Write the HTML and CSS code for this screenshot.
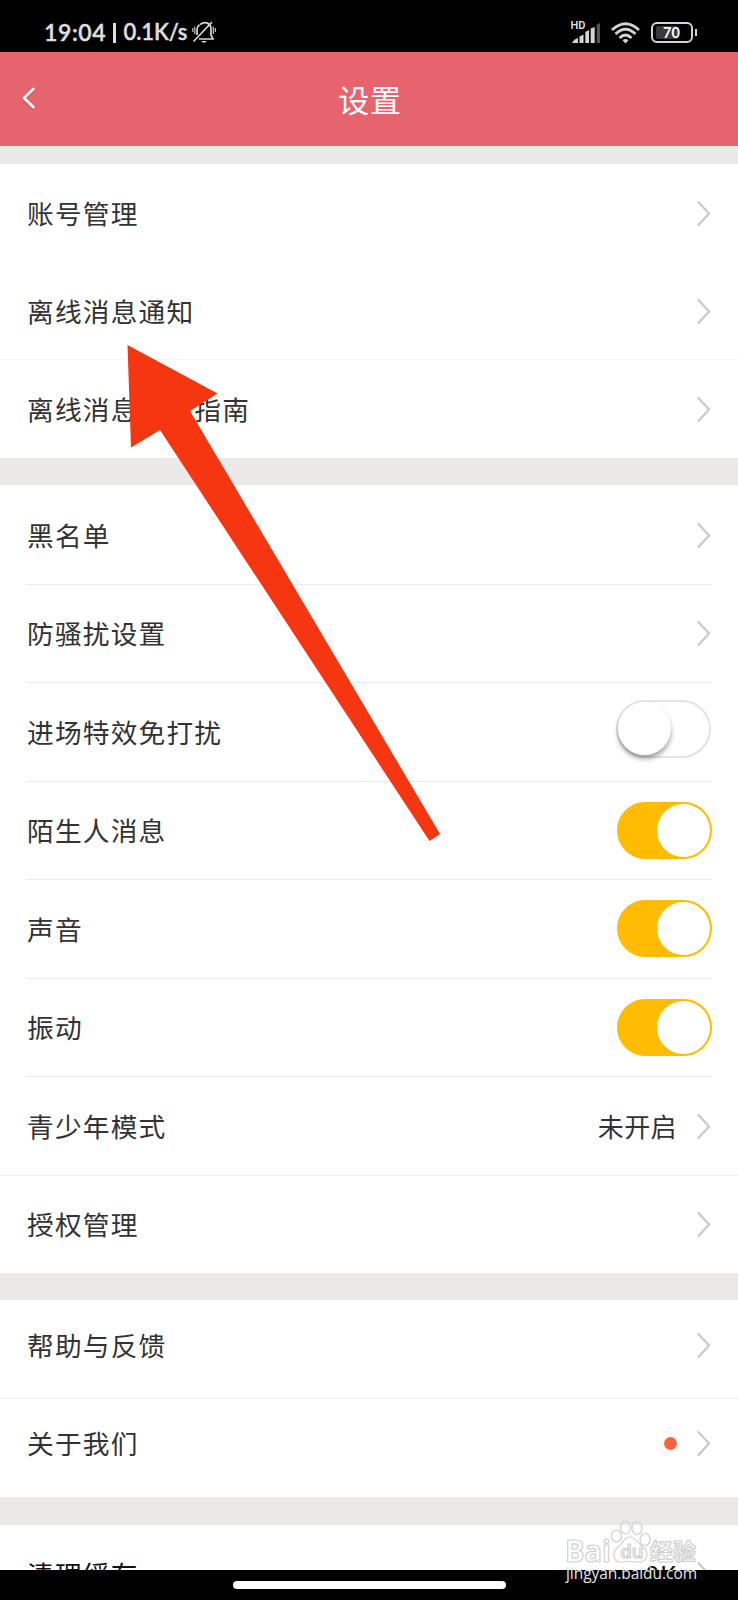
FILE: index.html
```html
<!DOCTYPE html>
<html lang="zh-CN">
<head>
  <meta charset="UTF-8" />
  <title>设置</title>
  <link rel="stylesheet" href="styles.css">
</head>
<body>

<svg class="defs" width="0" height="0">
  <symbol id="chevron" viewBox="0 0 14 26">
    <path d="M1.5 2 L12 13.5 L1.5 25" fill="none" stroke="#c9c9c9" stroke-width="2.2" stroke-linecap="round" stroke-linejoin="round"/>
  </symbol>
</svg>

<div class="phone">
  <div class="statusbar">
    <div class="status-left">
      <span class="clock">19:04</span>
      <span class="bar"></span>
      <span class="speed">0.1K/s</span>
      <svg class="bell" width="24" height="23" viewBox="0 0 24 23" fill="none" stroke="#d8d8d8" stroke-width="1.7">
        <path d="M8 3.5 C14 -.5 19 3 19 8 V14 L21 18 H7"/>
        <path d="M5 14 V8.5 Q5 5.5 7.5 3.7"/>
        <path d="M1.5 20.5 L20 1"/>
        <path d="M9 20 Q12 23.500 15 20 Z" fill="#d8d8d8" stroke="none"/>
        <path d="M.8 7 V11 M2.8 5.500 V13 M21.3 5.500 V13 M23.300 7 V11" stroke-width="1.1"/>
      </svg>
    </div>
    <div class="status-right">
      <div class="signal">
        <span class="hd">HD</span>
        <svg width="28" height="20" viewBox="0 0 28 20" fill="#d4d4d4">
          <path d="M0 20 Q2 16 6 15 V20 Z"/>
          <path d="M7.500 20 V13.5 L11.500 11.5 V20 Z"/>
          <path d="M13.300 20 V9 L17 7 V20 Z"/>
          <path d="M18.700 20 V5.5 L22.7 4 V20 Z"/>
          <path d="M24.700 20 V1.5 L28 0 V20 Z" fill="#555"/>
        </svg>
      </div>
      <svg class="wifi" width="29" height="22" viewBox="0 0 29 22" fill="none" stroke="#d4d4d4" stroke-width="2.800">
        <path d="M1 8 Q14.500 -4.500 28 8"/>
        <path d="M4.500 12 Q14.500 2.500 24.500 12"/>
        <path d="M8.500 16 Q14.500 10 20.500 16"/>
        <path d="M14.500 21.500 L11.500 18.300 Q14.500 15.800 17.500 18.300 Z" fill="#d4d4d4" stroke="none"/>
      </svg>
      <div class="battery"><span class="charge"></span><span class="percent">70</span></div>
      <span class="battery-tip"></span>
    </div>
  </div>

  <header class="header">
    <svg class="back" width="14" height="22" viewBox="0 0 14 22">
      <path d="M11.500 1.800 L2 11 L11.500 20.200" fill="none" stroke="#fff" stroke-width="2.600" stroke-linecap="round" stroke-linejoin="round"/>
    </svg>
    <h1>设置</h1>
  </header>

  <main class="content">
    <section class="group group-account">
      <div class="row no-line"><span class="label">账号管理</span><svg class="arrow"><use href="#chevron"/></svg></div>
      <div class="row full-line"><span class="label">离线消息通知</span><svg class="arrow"><use href="#chevron"/></svg></div>
      <div class="row no-line"><span class="label">离线消息设置指南</span><svg class="arrow"><use href="#chevron"/></svg></div>
    </section>

    <section class="group group-privacy">
      <div class="row"><span class="label">黑名单</span><svg class="arrow"><use href="#chevron"/></svg></div>
      <div class="row"><span class="label">防骚扰设置</span><svg class="arrow"><use href="#chevron"/></svg></div>
      <div class="row"><span class="label">进场特效免打扰</span><span class="switch"><i></i></span></div>
      <div class="row"><span class="label">陌生人消息</span><span class="switch on"><i></i></span></div>
      <div class="row"><span class="label">声音</span><span class="switch on"><i></i></span></div>
      <div class="row"><span class="label">振动</span><span class="switch on"><i></i></span></div>
      <div class="row full-line"><span class="label">青少年模式</span><span class="value">未开启</span><svg class="arrow"><use href="#chevron"/></svg></div>
      <div class="row no-line"><span class="label">授权管理</span><svg class="arrow"><use href="#chevron"/></svg></div>
    </section>

    <section class="group group-about">
      <div class="row full-line"><span class="label">帮助与反馈</span><svg class="arrow"><use href="#chevron"/></svg></div>
      <div class="row no-line"><span class="label">关于我们</span><span class="dot"></span><svg class="arrow"><use href="#chevron"/></svg></div>
    </section>

    <section class="group group-cache">
      <div class="row no-line"><span class="label">清理缓存</span><span class="value">0K</span><svg class="arrow"><use href="#chevron"/></svg></div>
    </section>
  </main>

  <div class="navbar"><span class="handle"></span></div>

  <svg class="pointer" width="738" height="1600" viewBox="0 0 738 1600">
    <polygon points="127.500,345 217.500,393.500 190,411 440,834 429.500,841 160,430 131,447.500" fill="#f63511"/>
  </svg>

  <svg class="watermark" width="150" height="70" viewBox="0 0 150 70">
    <g fill="none" stroke="#d0d0d0" stroke-width="1.200">
      <text class="wm-bai" x="5" y="42" textLength="46" lengthAdjust="spacingAndGlyphs">Bai</text>
      <ellipse cx="56.500" cy="16" rx="5" ry="6"/>
      <ellipse cx="65.500" cy="7.500" rx="5" ry="6.500"/>
      <ellipse cx="77" cy="8" rx="5" ry="6.500"/>
      <ellipse cx="85" cy="19.500" rx="5" ry="6"/>
      <path d="M70 17 C76 17 78 24 84 28 C90 34 86 43 78 42 Q70 41 62 42 C54 43 51 34 57 28 C63 24 64 17 70 17 Z"/>
      <text class="wm-du" x="60.500" y="38">du</text>
      <text class="wm-cn" x="90" y="40">经验</text>
    </g>
    <text class="wm-url" x="6" y="58.500" textLength="131">jingyan.baidu.com</text>
  </svg>
</div>

</body>
</html>
```

FILE: styles.css
```css
* {
  box-sizing: border-box;
}
body {
  margin: 0;
  background: #000;
  font-family: "Noto Sans CJK SC", sans-serif;
}
.defs {
  position: absolute;
}
.phone {
  position: relative;
  display: flex;
  flex-direction: column;
  width: 738px;
  height: 1600px;
  overflow: hidden;
}

/* status bar */
.statusbar {
  display: flex;
  flex: none;
  justify-content: space-between;
  height: 52px;
  padding: 13px 41px 0 44px;
  background: #000;
  color: #dedede;
}
.status-left {
  display: flex;
  align-items: center;
  height: 39px;
  font-family: Lato, sans-serif;
  font-size: 23px;
  font-weight: 600;
  line-height: 28px;
  -webkit-text-stroke: 0.4px #dedede;
}
.clock {
  width: 61px;
  margin-top: -2px;
  letter-spacing: 0.6px;
}
.bar {
  width: 2.5px;
  height: 20px;
  margin: 0 8px 0 8px;
  background: #dedede;
}
.speed {
  width: 64px;
  margin-top: -2px;
  font-size: 22px;
  letter-spacing: -0.1px;
}
.bell {
  margin-left: 4px;
}
.status-right {
  display: flex;
  align-items: center;
  height: 39px;
}
.signal {
  position: relative;
  display: flex;
  width: 28px;
  height: 20px;
}
.hd {
  position: absolute;
  left: -1px;
  top: -4px;
  font: 600 11px/13px Roboto, sans-serif;
}
.wifi {
  margin-left: 11px;
}
.battery {
  position: relative;
  width: 42px;
  height: 21px;
  margin-left: 11px;
  border: 2.5px solid #d4d4d4;
  border-radius: 6px;
  text-align: center;
}
.charge {
  position: absolute;
  left: 3px;
  top: 2px;
  width: 22px;
  height: 13px;
  border-radius: 2px;
  background: #3b3b3b;
}
.percent {
  position: relative;
  display: block;
  color: #fff;
  font: 700 14.5px/17px Lato, sans-serif;
}
.battery-tip {
  width: 2.5px;
  height: 7px;
  margin-left: 2px;
  background: #d4d4d4;
}

/* title bar */
.header {
  display: flex;
  flex: none;
  align-items: center;
  height: 94px;
  padding: 0 22px;
  background: #e6646e;
}
.header h1 {
  flex: 1;
  margin: 0 12px 0 0;
  color: #fff;
  font-size: 31px;
  font-weight: 400;
  letter-spacing: 0.8px;
  line-height: 40px;
  text-align: center;
}
.back {
  margin-top: -2px;
  filter: drop-shadow(0 1px 1px rgba(0, 0, 0, 0.2));
}

/* settings list */
.content {
  display: flex;
  flex: none;
  flex-direction: column;
  gap: 27px;
  height: 1424px;
  padding-top: 18px;
  overflow: hidden;
  background: #eae9e8;
}
.group {
  flex: none;
  padding: 0 26px;
  background: #fff;
}
.row {
  display: flex;
  align-items: center;
  height: 98.5px;
  border-bottom: 1px solid #ebebeb;
  color: #333;
}
.row.no-line {
  border-bottom-color: transparent;
}
.row.full-line {
  margin: 0 -26px;
  padding: 0 26px;
  border-bottom-color: #f1f1f1;
}
.group-account .row {
  height: 98px;
}
.group-account .full-line {
  border-bottom-color: #f7f7f7;
}
.group-privacy {
  padding-top: 1px;
}
.group-privacy .row:last-child {
  height: 97.5px;
}
.group-about .row {
  padding-bottom: 8px;
}
.group-cache {
  margin-top: 1px;
}
.group-cache .row {
  color: #111;
}
.label {
  flex: 1;
  padding-left: 1px;
  font-size: 26.7px;
  letter-spacing: 1.2px;
  line-height: 40px;
}
.value {
  margin-right: 20px;
  font-size: 26px;
  letter-spacing: 0.4px;
  line-height: 40px;
}
.arrow {
  width: 14px;
  height: 26px;
  margin-right: 1px;
}
.dot {
  width: 13px;
  height: 13px;
  margin-right: 20px;
  border-radius: 50%;
  background: #fc6340;
}
.switch {
  width: 95px;
  height: 58px;
  margin: -6px 1px 0 0;
  border: 2px solid #e4e4e4;
  border-radius: 29px;
  background: #fff;
}
.switch i {
  display: block;
  width: 53px;
  height: 53px;
  border-radius: 50%;
  background: #fff;
  box-shadow: 0 4px 5px rgba(0, 0, 0, 0.35);
}
.switch.on {
  height: 57px;
  margin: 0;
  border-color: #ffbc00;
  background: #ffbc00;
}
.switch.on i {
  margin-left: 38px;
  box-shadow: none;
}

/* gesture bar */
.navbar {
  display: flex;
  flex: none;
  justify-content: center;
  height: 30px;
  padding-top: 11px;
  background: #000;
}
.handle {
  width: 273px;
  height: 8px;
  border-radius: 4px;
  background: #fff;
}

/* overlays */
.pointer {
  position: absolute;
  left: 0;
  top: 0;
}
.watermark {
  position: absolute;
  left: 560px;
  top: 1520px;
}
.wm-bai {
  font: 700 31px "Open Sans", sans-serif;
}
.wm-du {
  font: 600 18px "Open Sans", sans-serif;
}
.wm-cn {
  font: 700 23px "Noto Sans CJK SC", sans-serif;
}
.wm-url {
  fill: #e6e6e6;
  font: 400 15.5px "Open Sans", sans-serif;
}
```
